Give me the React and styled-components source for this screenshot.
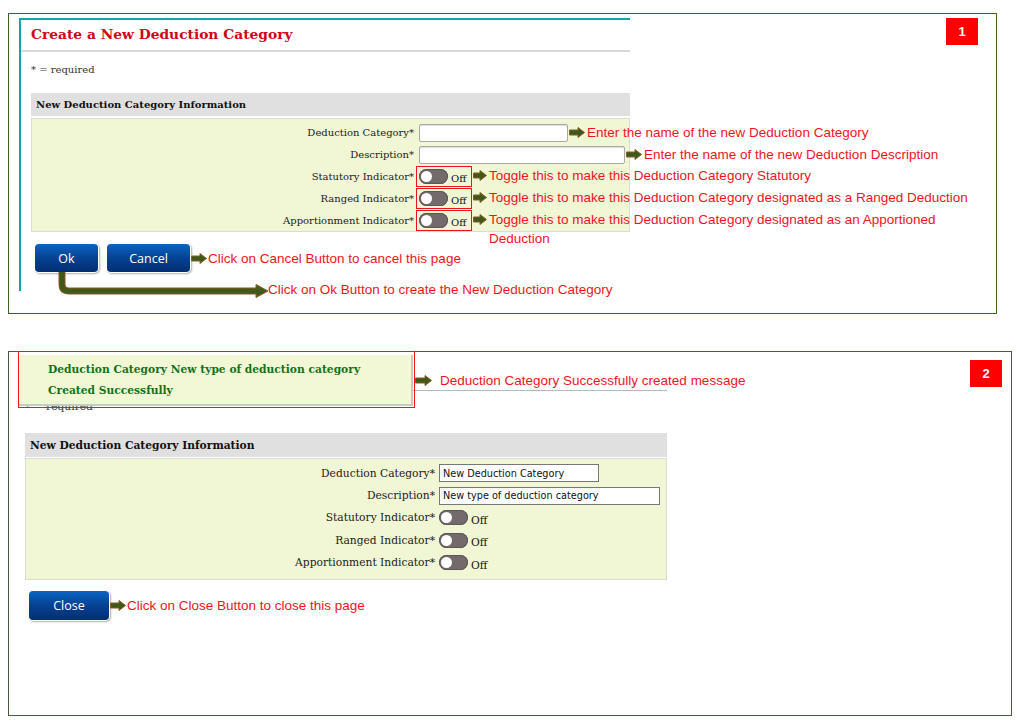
import React from "react";
import styled, { createGlobalStyle } from "styled-components";

const Global = createGlobalStyle`
  html, body { margin: 0; padding: 0; background: #fff; }
  body { font-family: "DejaVu Serif", serif; }
`;

const SERIF = `"DejaVu Serif", serif`;
const NOTE = `"Liberation Sans", Arial, sans-serif`;

const Page = styled.div`
  width: 1017px;
  height: 724px;
  padding: 13px 0 0 8px;
  box-sizing: border-box;
  display: flex;
  flex-direction: column;
`;

const Panel = styled.div`
  position: relative;
  box-sizing: border-box;
  width: ${(p) => p.$w}px;
  height: ${(p) => p.$h}px;
  margin-top: ${(p) => p.$mt || 0}px;
  border: 1px solid ${(p) => p.$border};
  padding: ${(p) => p.$pad};
  --fs: ${(p) => p.$fs}px;
`;

const Badge = styled.div`
  position: absolute;
  left: ${(p) => p.$x}px;
  top: ${(p) => p.$y}px;
  width: 32px;
  height: 27px;
  background: #ff0000;
  color: #fff;
  font: bold 13px ${NOTE};
  display: flex;
  align-items: center;
  justify-content: center;
`;

const Card = styled.div`
  box-sizing: border-box;
  width: 611px;
  height: 273px;
  border-top: 2px solid #16a3ac;
  border-left: 2px solid #16a3ac;
  display: flex;
  flex-direction: column;
`;

const TitleBar = styled.div`
  height: 32px;
  box-sizing: border-box;
  padding: 0 0 3px 10px;
  display: flex;
  align-items: center;
  border-bottom: 2px solid #d8d8d8;
  color: #d10019;
  font: bold 13.8px ${SERIF};
`;

const Required = styled.div`
  font: var(--fs) / 14px ${SERIF};
  color: #333;
  margin: ${(p) => p.$m};
`;

const Section = styled.div`
  width: ${(p) => p.$w}px;
  margin: ${(p) => p.$m};
  display: flex;
  flex-direction: column;
`;

const SectionHead = styled.div`
  height: ${(p) => p.$h}px;
  background: #e0e0e0;
  display: flex;
  align-items: center;
  padding-left: 5px;
  font: bold var(--fs) ${SERIF};
  color: #111;
`;

const SectionBody = styled.div`
  margin-top: ${(p) => p.$gap}px;
  height: ${(p) => p.$h}px;
  box-sizing: border-box;
  background: #f1f6d4;
  border: 1px solid #dcdcd4;
  padding-top: ${(p) => p.$pt}px;
  display: flex;
  flex-direction: column;
`;

const Row = styled.div`
  height: ${(p) => p.$h}px;
  display: flex;
  align-items: center;
`;

const Label = styled.div`
  width: ${(p) => p.$w}px;
  flex: none;
  text-align: right;
  font: var(--fs) ${SERIF};
  color: #222;
  margin-right: ${(p) => p.$gap}px;
  white-space: nowrap;
`;

const Anchor = styled.div`
  position: relative;
  display: flex;
  align-items: center;
`;

const Input = styled.div`
  box-sizing: border-box;
  width: ${(p) => p.$w}px;
  height: 18px;
  border: 1px solid ${(p) => (p.$plain ? "#777" : "#a9a9a9")};
  border-radius: ${(p) => (p.$plain ? 0 : 2)}px;
  background: #fff;
  box-shadow: ${(p) => (p.$plain ? "none" : "inset 0 1px 1px #ddd")};
  font: 9.7px "DejaVu Sans", sans-serif;
  color: #111;
  padding-left: 3px;
  display: flex;
  align-items: center;
  white-space: nowrap;
`;

const ToggleBox = styled.div`
  display: flex;
  align-items: center;
  box-sizing: border-box;
  height: ${(p) => (p.$boxed ? 21 : 18)}px;
  width: ${(p) => (p.$boxed ? "56px" : "auto")};
  margin-left: ${(p) => (p.$boxed ? -3 : 0)}px;
  border: ${(p) => (p.$boxed ? "1px solid #e8141e" : "none")};
  padding-left: ${(p) => (p.$boxed ? 2 : 0)}px;
`;

const Pill = styled.span`
  position: relative;
  width: 29px;
  height: 15px;
  border-radius: 8px;
  background: #726a6b;
  box-shadow: inset 0 0 0 1px #5d5657;
  flex: none;
  &::after {
    content: "";
    position: absolute;
    left: 2px;
    top: 2px;
    width: 11px;
    height: 11px;
    border-radius: 50%;
    background: #fff;
  }
`;

const OffText = styled.span`
  font: var(--fs) ${SERIF};
  color: #111;
  margin: 5px 0 0 3px;
`;

const Callout = styled.div`
  position: absolute;
  left: ${(p) => p.$left ?? "calc(100% + 1px)"};
  top: ${(p) => p.$top}px;
  display: flex;
  align-items: flex-start;
  gap: ${(p) => p.$gap ?? 2}px;
  white-space: ${(p) => (p.$wrap ? "normal" : "nowrap")};
  width: ${(p) => (p.$wrap ? `${p.$wrap}px` : "auto")};
`;

const NoteText = styled.span`
  font: 13.5px/19px ${NOTE};
  color: #f0141e;
`;

const ArrowSvg = styled.svg`
  flex: none;
  margin-top: 4px;
`;

const BlockArrow = ({ w = 16 }) => (
  <ArrowSvg width={w + 1} height="11" viewBox={`0 0 ${w + 1} 11`}>
    <path
      d={`M0.5 3 H${w - 6} V0.5 L${w + 0.5} 5.5 L${w - 6} 10.5 V8 H0.5 Z`}
      fill="#3f5a18"
      stroke="#8a5a2a"
      strokeWidth="1"
    />
  </ArrowSvg>
);

const ButtonRow = styled.div`
  position: relative;
  display: flex;
  gap: 9px;
  margin: ${(p) => p.$m};
`;

const Button = styled.div`
  box-sizing: border-box;
  width: ${(p) => p.$w}px;
  height: ${(p) => p.$h}px;
  border-radius: 4px;
  background: linear-gradient(#0a64c2, #053f8e 55%, #022f72);
  box-shadow: 0 0 0 1px #fff, 1px 1px 2px 1px #b0b0b0;
  color: #fff;
  font: 12.5px "Open Sans", sans-serif;
  display: flex;
  align-items: center;
  justify-content: center;
`;

const BentArrow = styled.svg`
  position: absolute;
  left: 21px;
  top: 28px;
`;

const Card2 = styled.div`
  width: 649px;
  margin-left: 9px;
  display: flex;
  flex-direction: column;
`;

const Card2Title = styled.div`
  height: 38px;
  border-bottom: 1px solid #b8b8b8;
`;

const Message = styled.div`
  position: absolute;
  left: 9px;
  top: -1px;
  box-sizing: border-box;
  width: 397px;
  height: 57px;
  border: 1px solid #f0141e;
  padding: 3px 1px 1px 0;
  display: flex;
`;

const MessageInner = styled.div`
  flex: 1;
  background: #f2f7d5;
  border-right: 2px solid #c9c9c9;
  border-bottom: 2px solid #c9c9c9;
  padding: 4px 0 0 29px;
  font: bold var(--fs) / 21px ${SERIF};
  color: #13731a;
`;

const rows1 = [
  { label: "Deduction Category*", input: 149, note: "Enter the name of the new Deduction Category" },
  { label: "Description*", input: 206, note: "Enter the name of the new Deduction Description" },
  { label: "Statutory Indicator*", note: "Toggle this to make this Deduction Category Statutory" },
  { label: "Ranged Indicator*", note: "Toggle this to make this Deduction Category designated as a Ranged Deduction" },
  {
    label: "Apportionment Indicator*",
    note: "Toggle this to make this Deduction Category designated as an Apportioned Deduction",
    wrap: 470,
  },
];

const rows2 = [
  { label: "Deduction Category*", input: 160, value: "New Deduction Category" },
  { label: "Description*", input: 221, value: "New type of deduction category" },
  { label: "Statutory Indicator*" },
  { label: "Ranged Indicator*" },
  { label: "Apportionment Indicator*" },
];

export default function App() {
  return (
    <>
      <Global />
      <Page>
        <Panel $w={989} $h={301} $border="#3b6520" $pad="4px 0 0 10px" $fs={10}>
          <Card>
            <TitleBar>Create a New Deduction Category</TitleBar>
            <Required $m="11px 0 0 10px">* = required</Required>
            <Section $w={599} $m="16px 0 0 10px">
              <SectionHead $h={23}>New Deduction Category Information</SectionHead>
              <SectionBody $gap={2} $h={114} $pt={3}>
                {rows1.map((r) => (
                  <Row key={r.label} $h={21.8}>
                    <Label $w={382} $gap={5}>{r.label}</Label>
                    <Anchor>
                      {r.input ? (
                        <Input $w={r.input} />
                      ) : (
                        <ToggleBox $boxed>
                          <Pill />
                          <OffText>Off</OffText>
                        </ToggleBox>
                      )}
                      <Callout $top={r.input ? -1 : 0} $wrap={r.wrap}>
                        <BlockArrow w={r.input ? 15 : 13} />
                        <NoteText>{r.note}</NoteText>
                      </Callout>
                    </Anchor>
                  </Row>
                ))}
              </SectionBody>
            </Section>
            <ButtonRow $m="12px 0 0 14px">
              <Button $w={63} $h={28}>Ok</Button>
              <Anchor>
                <Button $w={83} $h={28}>Cancel</Button>
                <Callout $top={5} $gap={1}>
                  <BlockArrow w={15} />
                  <NoteText>Click on Cancel Button to cancel this page</NoteText>
                </Callout>
              </Anchor>
              <BentArrow width="215" height="26" viewBox="0 0 215 26">
                <path d="M6 0 V12 Q6 19 13 19 H200" fill="none" stroke="#8a5a2a" strokeWidth="7" />
                <path d="M200 12.5 L212 19 L200 25.5 Z" fill="#3f5a18" stroke="#8a5a2a" strokeWidth="1" />
                <path d="M6 0 V12 Q6 19 13 19 H201" fill="none" stroke="#3f5a18" strokeWidth="5" />
              </BentArrow>
              <Callout $left="233px" $top={36}>
                <NoteText>Click on Ok Button to create the New Deduction Category</NoteText>
              </Callout>
            </ButtonRow>
          </Card>
          <Badge $x={937} $y={4}>1</Badge>
        </Panel>

        <Panel $w={1004} $h={365} $mt={37} $border="#4a5a40" $pad="0" $fs={10.7}>
          <Card2>
            <Card2Title />
            <Required $m="9px 0 0 7px">* = required</Required>
            <Section $w={642} $m="19px 0 0 7px">
              <SectionHead $h={24}>New Deduction Category Information</SectionHead>
              <SectionBody $gap={1} $h={122} $pt={3}>
                {rows2.map((r) => (
                  <Row key={r.label} $h={22.4}>
                    <Label $w={409} $gap={4}>{r.label}</Label>
                    {r.input ? (
                      <Input $w={r.input} $plain>{r.value}</Input>
                    ) : (
                      <ToggleBox>
                        <Pill />
                        <OffText>Off</OffText>
                      </ToggleBox>
                    )}
                  </Row>
                ))}
              </SectionBody>
            </Section>
            <ButtonRow $m="11px 0 0 11px">
              <Anchor>
                <Button $w={80} $h={29}>Close</Button>
                <Callout $top={5} $gap={1}>
                  <BlockArrow w={15} />
                  <NoteText>Click on Close Button to close this page</NoteText>
                </Callout>
              </Anchor>
            </ButtonRow>
          </Card2>
          <Message>
            <MessageInner>
              Deduction Category New type of deduction category
              <br />
              Created Successfully
            </MessageInner>
          </Message>
          <Callout $left="406px" $top={19} $gap={8}>
            <BlockArrow w={16} />
            <NoteText>Deduction Category Successfully created message</NoteText>
          </Callout>
          <Badge $x={961} $y={8}>2</Badge>
        </Panel>
      </Page>
    </>
  );
}
